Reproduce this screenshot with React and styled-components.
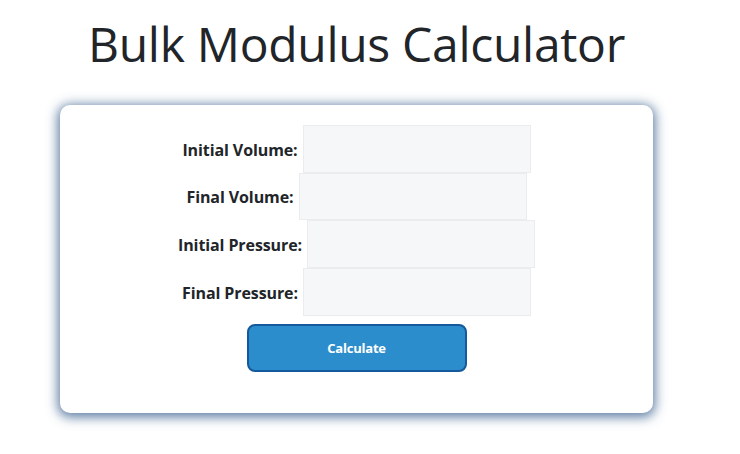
import React, { useState } from 'react';
import styled, { createGlobalStyle } from 'styled-components';

const GlobalStyle = createGlobalStyle`
  html, body {
    margin: 0;
    padding: 0;
    background: #ffffff;
  }
  body {
    font-family: "Open Sans", "Noto Sans", Arial, sans-serif;
    color: #212529;
  }
`;

const Page = styled.div`
  width: 713px;
  min-height: 454px;
  display: flex;
  flex-direction: column;
  align-items: center;
`;

const Title = styled.h1`
  margin: 12px 0 0;
  font-size: 48px;
  font-weight: 400;
  line-height: 64px;
  color: #212529;
  letter-spacing: -0.3px;
`;

const Card = styled.form`
  margin-top: 29px;
  width: 593px;
  box-sizing: border-box;
  padding: 20px 0 41px;
  background: #ffffff;
  border-radius: 10px;
  box-shadow: 0 2px 12px 2px rgba(45, 85, 135, 0.78);
  display: flex;
  flex-direction: column;
  align-items: center;
`;

const Row = styled.div`
  display: flex;
  align-items: center;
  justify-content: center;
  gap: 5px;
  height: 47.67px;
`;

const Label = styled.label`
  font-size: 16px;
  font-weight: 700;
  color: #212529;
  letter-spacing: -0.1px;
  padding-top: 2px;
`;

const Input = styled.input`
  box-sizing: border-box;
  width: 228px;
  height: 47.67px;
  margin: 0;
  padding: 0 10px;
  border: 1px solid #ebecee;
  background: #f6f7f9;
  font-family: inherit;
  font-size: 15px;
  color: #212529;

  &:focus {
    outline: none;
    border-color: #2a8dcb;
  }
`;

const Button = styled.button`
  margin-top: 8px;
  width: 220px;
  height: 48px;
  box-sizing: border-box;
  background: #2b8dcb;
  border: 2px solid #14599c;
  border-radius: 8px;
  color: #ffffff;
  font-family: inherit;
  font-size: 13px;
  font-weight: 700;
  letter-spacing: -0.2px;
  cursor: pointer;
`;

const fields = [
  { id: 'initialVolume', label: 'Initial Volume:' },
  { id: 'finalVolume', label: 'Final Volume:' },
  { id: 'initialPressure', label: 'Initial Pressure:' },
  { id: 'finalPressure', label: 'Final Pressure:' },
];

const App = () => {
  const [values, setValues] = useState({});

  const handleSubmit = (e) => {
    e.preventDefault();
  };

  return (
    <>
      <GlobalStyle />
      <Page>
        <Title>Bulk Modulus Calculator</Title>
        <Card onSubmit={handleSubmit}>
          {fields.map(f => (
            <Row key={f.id}>
              <Label htmlFor={f.id}>{f.label}</Label>
              <Input
                id={f.id}
                type="number"
                value={values[f.id] || ''}
                onChange={(e) => setValues({ ...values, [f.id]: e.target.value })}
              />
            </Row>
          ))}
          <Button type="submit">Calculate</Button>
        </Card>
      </Page>
    </>
  );
};

export default App;
